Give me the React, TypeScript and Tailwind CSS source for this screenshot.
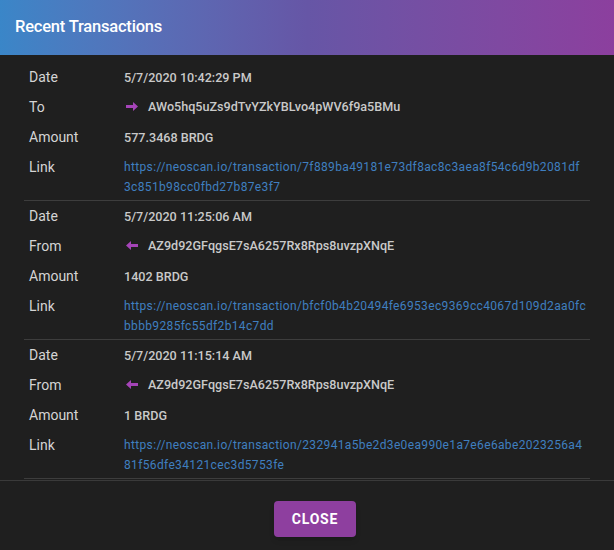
import React from 'react';

type Tx = {
  date: string;
  dir: 'To' | 'From';
  address: string;
  amount: string;
  hash: [string, string];
};

const txs: Tx[] = [
  {
    date: '5/7/2020 10:42:29 PM',
    dir: 'To',
    address: 'AWo5hq5uZs9dTvYZkYBLvo4pWV6f9a5BMu',
    amount: '577.3468 BRDG',
    hash: ['7f889ba49181e73df8ac8c3aea8f54c6d9b2081df', '3c851b98cc0fbd27b87e3f7'],
  },
  {
    date: '5/7/2020 11:25:06 AM',
    dir: 'From',
    address: 'AZ9d92GFqgsE7sA6257Rx8Rps8uvzpXNqE',
    amount: '1402 BRDG',
    hash: ['bfcf0b4b20494fe6953ec9369cc4067d109d2aa0fc', 'bbbb9285fc55df2b14c7dd'],
  },
  {
    date: '5/7/2020 11:15:14 AM',
    dir: 'From',
    address: 'AZ9d92GFqgsE7sA6257Rx8Rps8uvzpXNqE',
    amount: '1 BRDG',
    hash: ['232941a5be2d3e0ea990e1a7e6e6abe2023256a4', '81f56dfe34121cec3d5753fe'],
  },
];

const Arrow: React.FC<{ left?: boolean }> = ({ left }) => (
  <svg width="12" height="9" viewBox="0 0 12 9" className={left ? 'rotate-180' : ''}>
    <path d="M0 3h7V0l5 4.5L7 9V6H0z" fill="#a544b8" />
  </svg>
);

const Row: React.FC<{ label: string; children: React.ReactNode; tall?: boolean }> = ({ label, children, tall }) => (
  <div className={`flex ${tall ? 'pt-[5px] pb-[3px]' : 'h-[30px] items-center'}`}>
    <div className={`w-[100px] shrink-0 pl-[5px] text-[14px] text-[#d4d4d4] ${tall ? 'leading-[20px]' : ''}`}>{label}</div>
    <div className="min-w-0 flex-1">{children}</div>
  </div>
);

export default function App() {
  return (
    <div className="flex h-[550px] w-[614px] flex-col bg-[#1f1f1f]" style={{ fontFamily: 'Roboto, "Liberation Sans", sans-serif' }}>
      <div className="flex h-[55px] shrink-0 items-center bg-linear-to-r from-[#3a86c8] via-[#6656a6] to-[#8c3f9e] px-[15px] pb-[1px]">
        <h1 className="text-[16.5px] font-medium tracking-[-0.2px] text-white">Recent Transactions</h1>
      </div>

      <div className="h-[425px] shrink-0 overflow-hidden px-6 pt-[7px]">
        {txs.map((t) => (
          <div key={t.hash[0]} className="border-b border-[#3d3d3d]">
            <Row label="Date">
              <span className="text-[12.6px] font-medium text-[#c9c9c9]">{t.date}</span>
            </Row>
            <Row label={t.dir}>
              <div className="flex items-center gap-[10px] pl-[2px]">
                <Arrow left={t.dir === 'From'} />
                <span className="text-[12.6px] font-medium text-[#c9c9c9]">{t.address}</span>
              </div>
            </Row>
            <Row label="Amount">
              <span className="text-[12.6px] font-medium text-[#c9c9c9]">{t.amount}</span>
            </Row>
            <Row label="Link" tall>
              <a className="block whitespace-nowrap text-[12px] leading-[20px] tracking-[0.35px] text-[#3f7fc0]">
                https://neoscan.io/transaction/{t.hash[0]}
                <br />
                {t.hash[1]}
              </a>
            </Row>
          </div>
        ))}
      </div>

      <div className="flex flex-1 justify-center border-t border-[#3a3a3a] pl-[16px] pt-[20px]">
        <button className="h-[36px] w-[82px] rounded-[4px] bg-[#8e3f9f] text-[14px] font-bold tracking-[0.8px] text-white shadow-md">
          CLOSE
        </button>
      </div>
    </div>
  );
}
